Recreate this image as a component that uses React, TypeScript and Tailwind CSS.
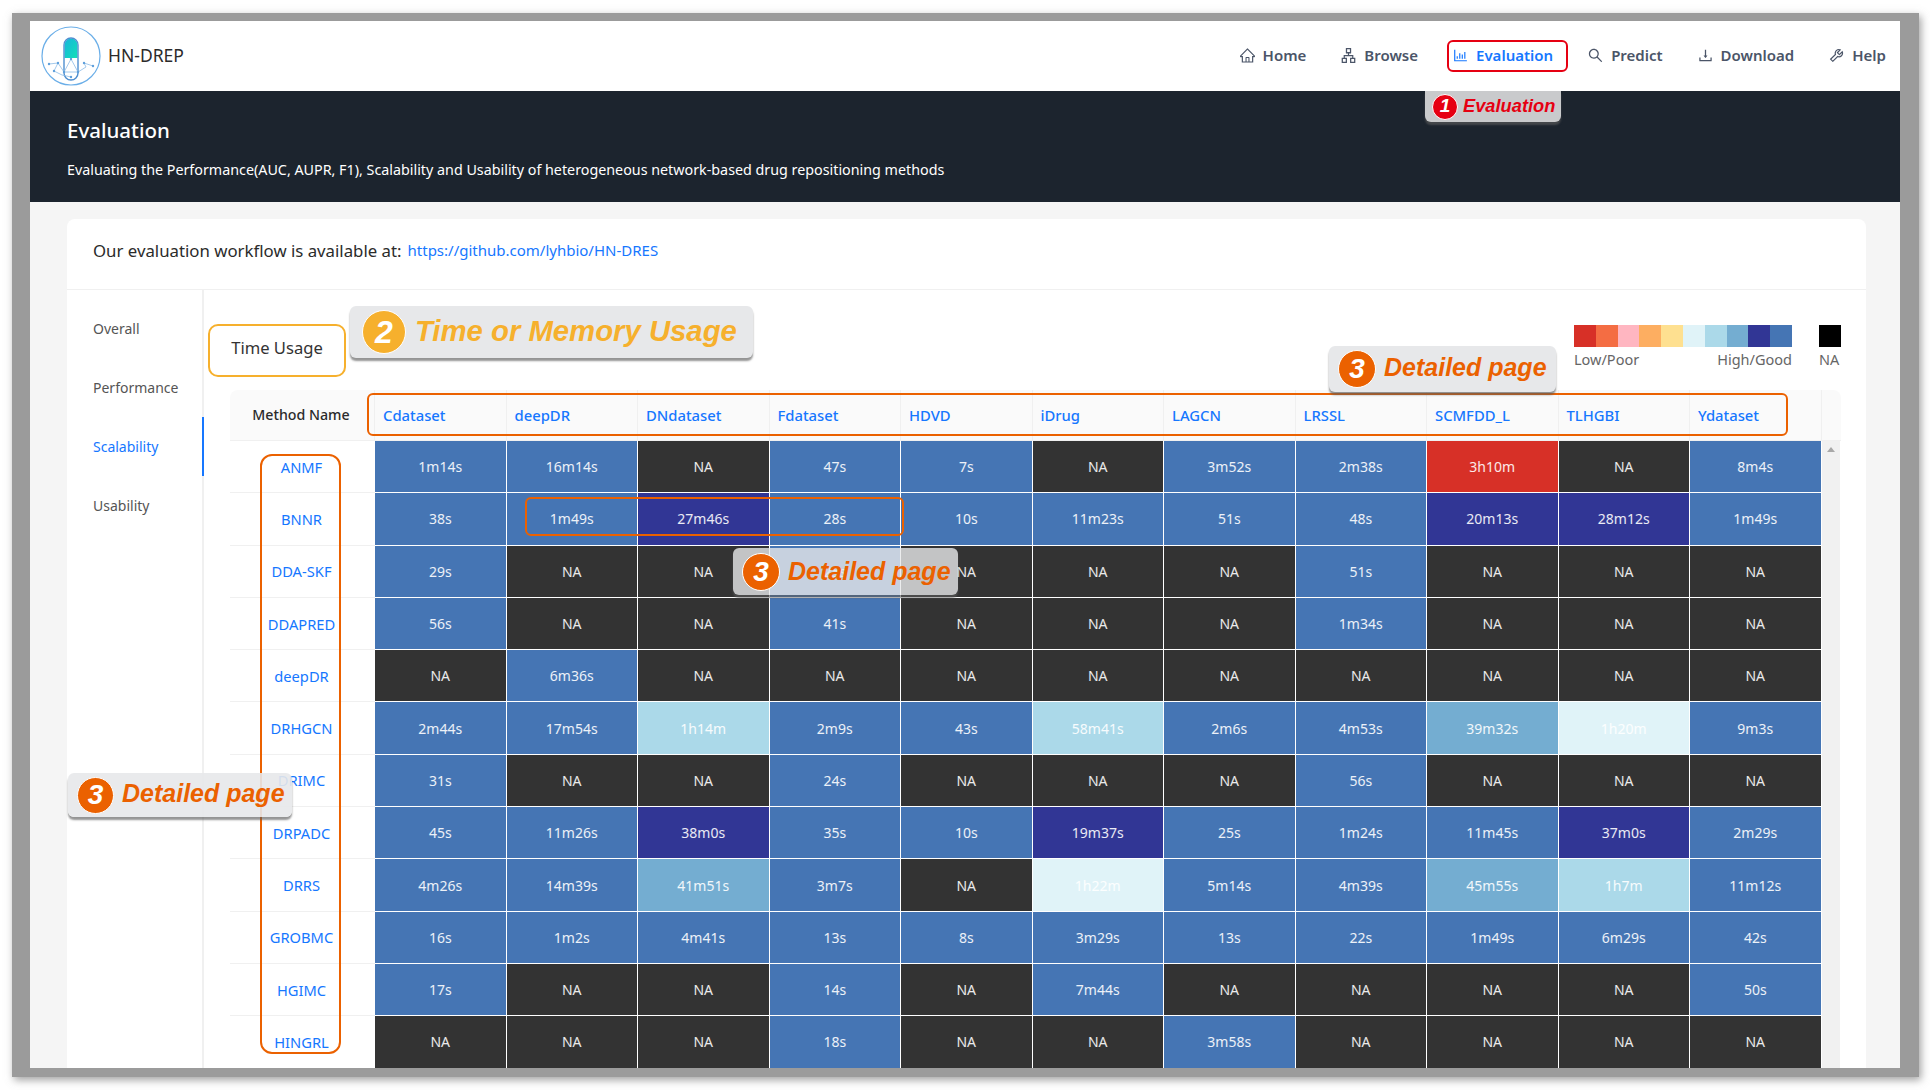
import React from "react";
import { AiOutlineHome, AiOutlineApartment, AiOutlineBarChart, AiOutlineSearch, AiOutlineDownload, AiOutlineTool } from "react-icons/ai";

const cols = ["Cdataset","deepDR","DNdataset","Fdataset","HDVD","iDrug","LAGCN","LRSSL","SCMFDD_L","TLHGBI","Ydataset"];
const rows: [string, string[]][] = [
  ["ANMF",["1m14s","16m14s","NA","47s","7s","NA","3m52s","2m38s","3h10m","NA","8m4s"]],
  ["BNNR",["38s","1m49s","27m46s","28s","10s","11m23s","51s","48s","20m13s","28m12s","1m49s"]],
  ["DDA-SKF",["29s","NA","NA","25s","NA","NA","NA","51s","NA","NA","NA"]],
  ["DDAPRED",["56s","NA","NA","41s","NA","NA","NA","1m34s","NA","NA","NA"]],
  ["deepDR",["NA","6m36s","NA","NA","NA","NA","NA","NA","NA","NA","NA"]],
  ["DRHGCN",["2m44s","17m54s","1h14m","2m9s","43s","58m41s","2m6s","4m53s","39m32s","1h20m","9m3s"]],
  ["DRIMC",["31s","NA","NA","24s","NA","NA","NA","56s","NA","NA","NA"]],
  ["DRPADC",["45s","11m26s","38m0s","35s","10s","19m37s","25s","1m24s","11m45s","37m0s","2m29s"]],
  ["DRRS",["4m26s","14m39s","41m51s","3m7s","NA","1h22m","5m14s","4m39s","45m55s","1h7m","11m12s"]],
  ["GROBMC",["16s","1m2s","4m41s","13s","8s","3m29s","13s","22s","1m49s","6m29s","42s"]],
  ["HGIMC",["17s","NA","NA","14s","NA","7m44s","NA","NA","NA","NA","50s"]],
  ["HINGRL",["NA","NA","NA","18s","NA","NA","3m58s","NA","NA","NA","NA"]],
];

function cellClass(v: string) {
  if (v === "NA") return "bg-[#333333]";
  if (v === "3h10m") return "bg-[#d73027]";
  if (["27m46s","20m13s","28m12s","38m0s","19m37s","37m0s"].includes(v)) return "bg-[#313695]";
  if (["1h14m","58m41s","1h7m"].includes(v)) return "bg-[#abd9e9]";
  if (["39m32s","41m51s","45m55s"].includes(v)) return "bg-[#74add1]";
  if (["1h20m","1h22m"].includes(v)) return "bg-[#e0f3f8]";
  return "bg-[#4575b4]";
}

const legend = ["bg-[#d73027]","bg-[#f46d43]","bg-[#ffb6c1]","bg-[#fdae61]","bg-[#fee090]","bg-[#e0f3f8]","bg-[#abd9e9]","bg-[#74add1]","bg-[#313695]","bg-[#4575b4]"];

function Logo() {
  return (
    <svg width="62" height="62" viewBox="0 0 62 62" className="shrink-0">
      <defs>
        <linearGradient id="pill" x1="0" y1="0" x2="1" y2="1">
          <stop offset="0" stopColor="#17b6dc" />
          <stop offset="1" stopColor="#12dfb8" />
        </linearGradient>
      </defs>
      <circle cx="31" cy="31" r="29" fill="none" stroke="#6aaee8" strokeWidth="1.2" />
      <path d="M24.5 33V20a6.5 6.5 0 0 1 13 0v13z" fill="url(#pill)" />
      <rect x="24" y="13" width="14" height="42" rx="7" fill="none" stroke="#4f8fd0" strokeWidth="1.4" />
      <path d="M31 34 L24 47 L38 47 Z M9 39 L18 38 L14 46 L22 50 L31 52 M44 38 L53 41 M38 47 L46 42 L44 38 M24 47 L18 38" fill="none" stroke="#8dbbe6" strokeWidth="0.8" />
      <g fill="#5f9fdc">
        <circle cx="9" cy="39" r="1.2" /><circle cx="18" cy="38" r="1.2" /><circle cx="14" cy="46" r="1.2" />
        <circle cx="31" cy="52" r="1.2" /><circle cx="44" cy="38" r="1.2" /><circle cx="53" cy="41" r="1.2" />
        <circle cx="24" cy="47" r="1.2" /><circle cx="38" cy="47" r="1.2" /><circle cx="31" cy="34" r="1.2" />
      </g>
    </svg>
  );
}

function NavItem({ icon, label, active }: { icon: React.ReactNode; label: string; active?: boolean }) {
  return (
    <div className={`flex items-center gap-[7px] text-[15px] font-semibold ${active ? "text-[#1677ff]" : "text-[#4b5568]"}`}>
      <span className="text-[17px] leading-none">{icon}</span>
      <span>{label}</span>
    </div>
  );
}

function Callout({ n, text, box, circle, color, size, numSize }: { n: string; text: string; box: string; circle: string; color: string; size: string; numSize: string }) {
  return (
    <div className={`absolute z-20 flex items-center rounded-[6px] shadow-[0_3px_2px_rgba(90,90,90,0.65)] ${box}`}>
      <div className={`flex shrink-0 items-center justify-center rounded-full border border-white text-white font-bold italic ${circle} ${numSize}`}>{n}</div>
      <span className={`font-bold italic whitespace-nowrap ${color} ${size}`}>{text}</span>
    </div>
  );
}

export default function App() {
  return (
    <div className="relative h-[1090px] w-[1930px] overflow-hidden bg-white pl-[12px] pt-[13px] font-['Noto_Sans',sans-serif]">
      <div className="h-[1064px] w-[1907px] bg-[#9b9b9b] pl-[18px] pr-[19px] pt-[8px] pb-[9px] shadow-[2px_3px_8px_rgba(120,120,120,0.7)]">
        <div className="flex h-[1047px] w-[1870px] flex-col overflow-hidden bg-[#f5f5f5]">
          <header className="flex h-[70px] shrink-0 items-center justify-between bg-white pl-[10px] pr-[14px]">
            <div className="flex items-center gap-[6px]">
              <Logo />
              <span className="pb-[2px] text-[17.5px] text-[#2b2b2b]">HN-DREP</span>
            </div>
            <nav className="flex items-center gap-[34px] pb-[2px]">
              <NavItem icon={<AiOutlineHome />} label="Home" />
              <NavItem icon={<AiOutlineApartment />} label="Browse" />
              <NavItem icon={<AiOutlineBarChart />} label="Evaluation" active />
              <NavItem icon={<AiOutlineSearch />} label="Predict" />
              <NavItem icon={<AiOutlineDownload />} label="Download" />
              <NavItem icon={<AiOutlineTool />} label="Help" />
            </nav>
          </header>
          <section className="flex h-[111px] shrink-0 flex-col bg-[#1c242e] pl-[37px] pt-[25px] text-white">
            <h1 className="text-[20.5px] font-medium leading-[28px]">Evaluation</h1>
            <p className="mt-[15px] text-[14.3px] leading-[22px]">Evaluating the Performance(AUC, AUPR, F1), Scalability and Usability of heterogeneous network-based drug repositioning methods</p>
          </section>
          <main className="min-h-0 flex-1 pl-[37px] pr-[34px] pt-[17px]">
            <div className="flex h-full flex-col rounded-t-[8px] bg-white">
              <div className="flex h-[71px] shrink-0 items-center gap-[6px] border-b border-[#f0f0f0] pb-[7px] pl-[26px] text-[#2b2b2b]">
                <span className="text-[16.8px]">Our evaluation workflow is available at:</span>
                <a className="text-[15px] text-[#1677ff]">https://github.com/lyhbio/HN-DRES</a>
              </div>
              <div className="flex min-h-0 flex-1">
                <aside className="w-[137px] shrink-0 border-r-2 border-[#f0f0f0] pt-[9px] text-[14px] text-[#555]">
                  <div className="flex h-[59px] items-center pl-[26px]">Overall</div>
                  <div className="flex h-[59px] items-center pl-[26px]">Performance</div>
                  <div className="-mr-[2px] flex h-[59px] items-center border-r-2 border-[#1677ff] pl-[26px] text-[#1677ff]">Scalability</div>
                  <div className="flex h-[59px] items-center pl-[26px]">Usability</div>
                </aside>
                <div className="flex min-w-0 flex-1 flex-col">
                  <div className="flex h-[100px] shrink-0 pl-[4px] pr-[25px]">
                    <div className="mt-[34px] flex h-[53px] w-[138px] items-center justify-center rounded-[10px] border-2 border-[#f6b02d] pb-[5px] text-[16.6px] text-[#333]">Time Usage</div>
                    <div className="ml-auto mt-[35px] flex gap-[27px] text-[14.5px] leading-[22px] text-[#666]">
                      <div className="w-[218px]">
                        <div className="flex h-[22px]">
                          {legend.map((c) => <div key={c} className={`h-full flex-1 ${c}`} />)}
                        </div>
                        <div className="mt-[1px] flex justify-between"><span>Low/Poor</span><span>High/Good</span></div>
                      </div>
                      <div>
                        <div className="h-[22px] w-[22px] bg-black" />
                        <div className="mt-[1px]">NA</div>
                      </div>
                    </div>
                  </div>
                  <div className="ml-[26px] mr-[25px] min-h-0 flex-1">
                    <div className="grid h-[51px] grid-cols-[145px_repeat(11,131.5px)_18px] rounded-t-[8px] border-b border-[#f0f0f0] bg-[#fafafa] text-[14.8px] font-medium">
                      <div className="flex items-center justify-center border-r border-[#f0f0f0] pr-[2px] text-[14.2px] text-[#2b2b2b]">Method Name</div>
                      {cols.map((c) => (
                        <div key={c} className="flex items-center border-r border-[#f0f0f0] pl-[8px] text-[#1677ff]">{c}</div>
                      ))}
                      <div />
                    </div>
                    <div className="flex">
                      <div className="grid w-[1592px] grid-cols-[145px_repeat(11,131.5px)] auto-rows-[52.3px]">
                        {rows.map(([name, vals]) => (
                          <React.Fragment key={name}>
                            <div className="flex items-center justify-center border-b border-[#f0f0f0] pr-[2px] text-[14.7px] text-[#1677ff]">{name}</div>
                            {vals.map((v, i) => (
                              <div key={i} className={`flex items-center justify-center border-b border-r border-white text-[14px] text-white/90 ${cellClass(v)}`}>{v}</div>
                            ))}
                          </React.Fragment>
                        ))}
                      </div>
                      <div className="flex w-[18px] justify-center bg-[#f1f1f1] pt-[6px]">
                        <div className="h-0 w-0 border-x-[4px] border-b-[5px] border-x-transparent border-b-[#a8a8a8]" />
                      </div>
                    </div>
                  </div>
                </div>
              </div>
            </div>
          </main>
        </div>
      </div>

      <div className="absolute left-[1447px] top-[40px] z-10 h-[32px] w-[121px] rounded-[6px] border-2 border-[#e60012]" />
      <div className="absolute left-[367px] top-[393px] z-10 h-[43px] w-[1421px] rounded-[6px] border-2 border-[#eb6100]" />
      <div className="absolute left-[260px] top-[454px] z-10 h-[600px] w-[81px] rounded-[12px] border-2 border-[#eb6100]" />
      <div className="absolute left-[525px] top-[497px] z-10 h-[39px] w-[379px] rounded-[6px] border-2 border-[#eb6100]" />

      <Callout n="1" text="Evaluation" box="left-[1425px] top-[91px] h-[31px] w-[136px] bg-[#c9cacc] pl-[7px] gap-[5px] rounded-t-none" circle="h-[26px] w-[26px] bg-[#e60012]" color="text-[#e60012]" size="pb-[2px] text-[18.3px] font-['Liberation_Sans',sans-serif]" numSize="text-[19px] font-['Liberation_Sans',sans-serif]" />
      <Callout n="2" text="Time or Memory Usage" box="left-[350px] top-[306px] h-[52px] w-[403px] bg-[#e7e8ea] pl-[12px] gap-[9px]" circle="h-[44px] w-[44px] bg-[#f6b02d]" color="text-[#f6b02d]" size="pb-[2px] text-[29.3px] font-['Liberation_Sans',sans-serif]" numSize="text-[32px] font-['Liberation_Sans',sans-serif]" />
      <Callout n="3" text="Detailed page" box="left-[1329px] top-[346px] h-[46px] w-[227px] bg-[#e7e8ea] pl-[9px] gap-[8px]" circle="h-[38px] w-[38px] bg-[#eb6100]" color="text-[#eb6100]" size="pb-[2px] text-[25px] font-['Liberation_Sans',sans-serif]" numSize="text-[28px] font-['Liberation_Sans',sans-serif]" />
      <Callout n="3" text="Detailed page" box="left-[733px] top-[548px] h-[47px] w-[225px] bg-[#e7e8ea]/80 pl-[9px] gap-[8px]" circle="h-[38px] w-[38px] bg-[#eb6100]" color="text-[#eb6100]" size="text-[25px] font-['Liberation_Sans',sans-serif]" numSize="text-[28px] font-['Liberation_Sans',sans-serif]" />
      <Callout n="3" text="Detailed page" box="left-[68px] top-[773px] h-[44px] w-[224px] bg-[#e7e8ea]/90 pl-[9px] gap-[8px]" circle="h-[37px] w-[37px] bg-[#eb6100]" color="text-[#eb6100]" size="pb-[3px] text-[25px] font-['Liberation_Sans',sans-serif]" numSize="text-[28px] font-['Liberation_Sans',sans-serif]" />
    </div>
  );
}
